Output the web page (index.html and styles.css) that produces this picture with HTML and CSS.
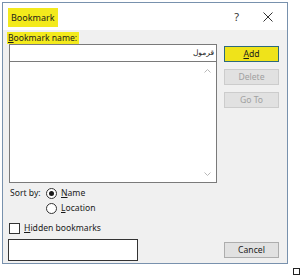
FILE: index.html
```html
<!DOCTYPE html>
<html>
<head>
<meta charset="utf-8">
<link rel="stylesheet" href="styles.css">
</head>
<body>
<div class="dialog">
  <div class="titlebar">
    <span class="title hl">Bookmark</span>
    <span class="help">?</span>
    <span class="close">
      <svg width="10" height="10" viewBox="0 0 10 10"><path d="M0.5 0.5L9.5 9.5M9.5 0.5L0.5 9.5" stroke="#333" stroke-width="1"/></svg>
    </span>
  </div>
  <div class="content">
    <div class="left">
      <div class="label"><span class="hl"><u>B</u>ookmark name:</span></div>
      <div class="input" dir="rtl">قرمول</div>
      <div class="list">
        <svg class="arrow up" width="7" height="4" viewBox="0 0 7 4"><path d="M0.5 3.5L3.5 0.5L6.5 3.5" fill="none" stroke="#b8b8b8"/></svg>
        <svg class="arrow down" width="7" height="4" viewBox="0 0 7 4"><path d="M0.5 0.5L3.5 3.5L6.5 0.5" fill="none" stroke="#b8b8b8"/></svg>
      </div>
      <div class="sortrow">
        <span class="sortlbl">Sort by:</span>
        <div class="radios">
          <div class="opt"><span class="radio on"></span><span><u>N</u>ame</span></div>
          <div class="opt"><span class="radio"></span><span><u>L</u>ocation</span></div>
        </div>
      </div>
      <div class="opt hidden"><span class="check"></span><span><u>H</u>idden bookmarks</span></div>
      <div class="blank"></div>
    </div>
    <div class="right">
      <div class="btn add"><u>A</u>dd</div>
      <div class="btn dis">Delete</div>
      <div class="btn dis">Go To</div>
      <div class="spacer"></div>
      <div class="btn cancel">Cancel</div>
    </div>
  </div>
</div>
<div class="corner"></div>
</body>
</html>
```
FILE: styles.css
```css
html, body {
  margin: 0;
  padding: 0;
  background: #ffffff;
}
body {
  width: 300px;
  height: 276px;
  position: relative;
  font-family: "Noto Sans", "DejaVu Sans", sans-serif;
  font-size: 8.6px;
  color: #1a1a1a;
}
.dialog {
  position: absolute;
  left: 2px;
  top: 2px;
  width: 284px;
  height: 260px;
  border: 1px solid #7891ad;
  background: #f0f0f0;
  display: flex;
  flex-direction: column;
}
.titlebar {
  height: 27px;
  background: #ffffff;
  display: flex;
  align-items: center;
  padding-left: 5px;
}
.hl {
  background: #f3ea1c;
}
.title {
  font-size: 9px;
  padding: 3px 3px;
  margin-top: 1px;
}
.help {
  margin-left: auto;
  font-size: 11px;
  margin-right: 24px;
  color: #333;
}
.close {
  width: 10px;
  height: 10px;
  margin-right: 14px;
  display: flex;
}
.content {
  flex: 1;
  display: flex;
}
.left {
  width: 208px;
  margin-left: 6px;
  display: flex;
  flex-direction: column;
}
.label {
  margin-top: 2px;
  margin-left: -2px;
  height: 12px;
  line-height: 12px;
}
.label .hl {
  padding: 0 2px 0 1px;
}
.input {
  margin-top: 0;
  height: 16px;
  border: 1px solid #7a7a7a;
  background: #fff;
  line-height: 15px;
  padding: 0 2px;
  font-size: 7.5px;
}
.list {
  height: 121px;
  border: 1px solid #7a7a7a;
  border-top: none;
  background: #fff;
  display: flex;
  flex-direction: column;
  align-items: flex-end;
  justify-content: space-between;
  padding: 7px 5px 6px 0;
  box-sizing: border-box;
}
.sortrow {
  display: flex;
  margin-top: 3px;
}
.sortlbl {
  margin-left: 1px;
  width: 36px;
  line-height: 14px;
}
.radios {
  display: flex;
  flex-direction: column;
  gap: 1px;
}
.opt {
  display: flex;
  align-items: center;
  height: 14px;
}
.radio {
  width: 9px;
  height: 9px;
  border: 1px solid #333;
  border-radius: 50%;
  background: #fff;
  margin-right: 4px;
  box-sizing: content-box;
  display: flex;
  align-items: center;
  justify-content: center;
}
.radio.on::after {
  content: "";
  width: 5px;
  height: 5px;
  border-radius: 50%;
  background: #1a1a1a;
}
.hidden {
  margin-top: 6px;
}
.check {
  width: 9px;
  height: 9px;
  border: 1px solid #333;
  background: #fff;
  margin-right: 4px;
}
.blank {
  margin-top: 4px;
  margin-left: -1px;
  width: 128px;
  height: 20px;
  border: 1px solid #333;
  background: #fff;
}
.right {
  width: 55px;
  margin-left: 7px;
  display: flex;
  flex-direction: column;
  gap: 7px;
  padding-top: 16px;
  padding-bottom: 5px;
  box-sizing: border-box;
}
.btn {
  height: 16px;
  box-sizing: border-box;
  border: 1px solid #adadad;
  background: #e1e1e1;
  text-align: center;
  line-height: 14px;
}
.btn.add {
  background: #efe31a;
  border: 1px solid #2d6a7c;
}
.btn.dis {
  color: #a0a0a0;
  border-color: #cccccc;
}
.spacer {
  flex: 1;
}
.corner {
  position: absolute;
  left: 293px;
  top: 268px;
  width: 5px;
  height: 5px;
  border: 1px solid #222;
}
```
